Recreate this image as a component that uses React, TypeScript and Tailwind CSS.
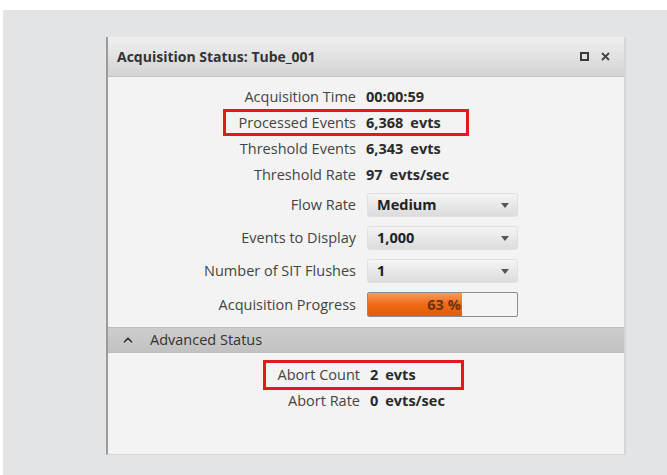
import { ChevronUp } from "lucide-react";

type Row = { label: string; value: string; unit?: string; boxed?: boolean };

const stats: Row[] = [
  { label: "Acquisition Time", value: "00:00:59" },
  { label: "Processed Events", value: "6,368", unit: "evts", boxed: true },
  { label: "Threshold Events", value: "6,343", unit: "evts" },
  { label: "Threshold Rate", value: "97", unit: "evts/sec" },
];

const selects = [
  { label: "Flow Rate", value: "Medium" },
  { label: "Events to Display", value: "1,000" },
  { label: "Number of SIT Flushes", value: "1" },
];

const advanced: Row[] = [
  { label: "Abort Count", value: "2", unit: "evts", boxed: true },
  { label: "Abort Rate", value: "0", unit: "evts/sec" },
];

function StatRow({ row, labelWidth, box }: { row: Row; labelWidth: string; box: string }) {
  return (
    <div className="relative flex h-[26px] items-center">
      {row.boxed && (
        <div className={`pointer-events-none absolute border-[3px] border-[#e3191f] ${box}`} />
      )}
      <div className={`${labelWidth} shrink-0 text-right text-[#444]`}>{row.label}</div>
      <div className="ml-[10px] whitespace-nowrap font-bold text-[#2a2a2a]">
        {row.value}
        {row.unit && <span className="ml-[7px]">{row.unit}</span>}
      </div>
    </div>
  );
}

function Dropdown({ value }: { value: string }) {
  return (
    <div className="flex h-[24px] w-[151px] items-center justify-between rounded-[3px] border border-[#e0e0e0] bg-gradient-to-b from-[#f4f4f4] to-[#dcdcdc] pl-[9px] pr-[8px] font-bold text-[#222]">
      <span>{value}</span>
      <svg width="8" height="5" viewBox="0 0 8 5">
        <path d="M0 0h8L4 5z" fill="#555" />
      </svg>
    </div>
  );
}

export default function App() {
  return (
    <div
      className="h-[475px] w-[667px] bg-white pl-[3px] pt-[10px] text-[14.5px]"
      style={{ fontFamily: '"Open Sans", "Noto Sans", sans-serif' }}
    >
      <div className="h-[465px] bg-[#e3e4e6] pl-[103px] pt-[27px]">
        <div className="flex h-[418px] w-[520px] flex-col border-l-2 border-r-2 border-b border-[#d5d6d8] border-l-[#9b9b9b] bg-[#f3f3f3]">
          {/* title bar */}
          <div className="flex h-[40px] items-center justify-between border-b border-[#c4c4c4] bg-gradient-to-b from-[#f0f0f0] to-[#d3d3d3] pl-[9px] pr-[14px]">
            <span className="text-[14px] font-bold text-[#333]">Acquisition Status: Tube_001</span>
            <div className="flex items-center gap-[12px]">
              <div className="h-[9px] w-[9px] border-2 border-[#3c3c3c]" />
              <svg width="9" height="9" viewBox="0 0 9 9">
                <path d="M1 1l7 7M8 1L1 8" stroke="#444" strokeWidth="1.8" />
              </svg>
            </div>
          </div>

          <div className="pl-[115px] pt-[7px]">
            {stats.map((r) => (
              <StatRow key={r.label} row={r} labelWidth="w-[133px]" box="-top-[1px] bottom-0 left-0 w-[246px]" />
            ))}
          </div>

          <div className="flex flex-col gap-[9px] pt-[5px]">
            {selects.map((s) => (
              <div key={s.label} className="flex items-center">
                <div className="w-[248px] text-right text-[#444]">{s.label}</div>
                <div className="ml-[11px]">
                  <Dropdown value={s.value} />
                </div>
              </div>
            ))}
            <div className="flex items-center">
              <div className="w-[248px] text-right text-[#444]">Acquisition Progress</div>
              <div className="relative ml-[11px] h-[25px] w-[151px] overflow-hidden rounded-[2px] border border-[#8c8c8c] bg-[#f4f4f4]">
                <div
                  className="h-full bg-gradient-to-b from-[#f79a55] via-[#ee6a12] to-[#e25c0a]"
                  style={{ width: "63%" }}
                />
                <div className="absolute inset-0 flex items-center justify-center pl-[3px] font-bold text-[#6a3412]">
                  63 %
                </div>
              </div>
            </div>
          </div>

          {/* collapsible section */}
          <div className="mt-[10px] flex h-[26px] items-center border-y border-[#bdbdbd] bg-gradient-to-b from-[#cdcdcd] to-[#c2c2c2] pl-[13px] text-[#333]">
            <ChevronUp size={14} strokeWidth={3} className="text-[#333]" />
            <span className="ml-[15px]">Advanced Status</span>
          </div>

          <div className="pl-[160px] pt-[9px]">
            {advanced.map((r) => (
              <StatRow key={r.label} row={r} labelWidth="w-[92px]" box="-top-[2px] -bottom-[2px] -left-[5px] w-[201px]" />
            ))}
          </div>
        </div>
      </div>
    </div>
  );
}
